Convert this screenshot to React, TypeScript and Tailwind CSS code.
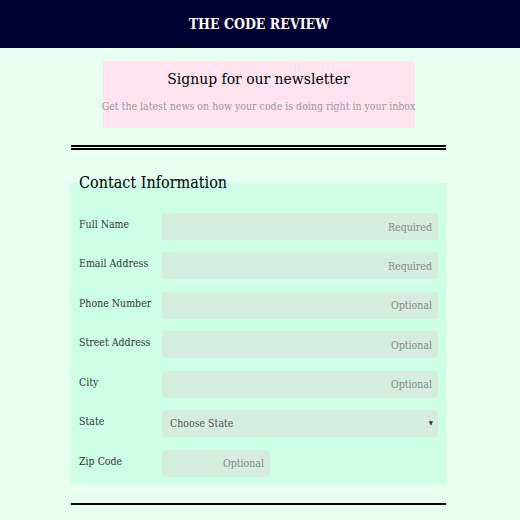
import { ChangeEvent, useState } from "react";

const fields = [
  { label: "Full Name", hint: "Required" },
  { label: "Email Address", hint: "Required" },
  { label: "Phone Number", hint: "Optional" },
  { label: "Street Address", hint: "Optional" },
  { label: "City", hint: "Optional" },
];

const serif = "font-['DejaVu_Serif_Condensed','DejaVu_Serif',serif] [font-stretch:condensed]";

function Row({ label, children }: { label: string; children: React.ReactNode }) {
  return (
    <div className="flex items-start">
      <label className="w-[83px] flex-none whitespace-nowrap pt-[4px] text-[10.5px] leading-[14px] text-[#333]">{label}</label>
      {children}
    </div>
  );
}

export default function App() {
  const [state, setState] = useState("");

  return (
    <div className={`min-h-screen bg-[#e6fff0] ${serif}`}>
      <header className="flex h-[48px] items-center justify-center bg-[#000033] pr-[2px]">
        <h1 className="text-[14px] font-bold text-white">THE CODE REVIEW</h1>
      </header>

      <main className="pr-[3px]">
        <section className="mx-auto mt-[13px] flex h-[67px] w-[312px] flex-col items-center bg-[#ffe4f0] pt-[6px]">
          <h2 className="text-[15.5px] leading-[24px] text-black">Signup for our newsletter</h2>
          <p className="mt-[8px] whitespace-nowrap text-[10.5px] text-[#999]">
            Get the latest news on how your code is doing right in your inbox
          </p>
        </section>

        <div className="mx-auto mt-[17px] w-[375px] border-t-[5px] border-double border-black" />

        <form className="mx-auto mt-[22px] w-[375px]">
          <fieldset className="bg-[#ccffe6] px-[8px] pb-[7px]">
            <legend className="px-0 text-[16px] leading-[22px] text-black">Contact Information</legend>
            <div className="mt-[19px] flex flex-col gap-[12.4px]">
              {fields.map((f) => (
                <Row key={f.label} label={f.label}>
                  <input
                    placeholder={f.hint}
                    className="h-[27px] flex-1 rounded-[2px] bg-[#d4ede0] px-[6px] text-right text-[10.5px] outline-none placeholder:text-[#888]"
                  />
                </Row>
              ))}
              <Row label="State">
                <div className="relative flex-1">
                  <select
                    value={state}
                    onChange={(e: ChangeEvent<HTMLSelectElement>) => setState(e.target.value)}
                    className="h-[27px] w-full appearance-none rounded-[2px] bg-[#d4ede0] px-[8px] text-[10.5px] text-[#555] outline-none"
                  >
                    <option value="">Choose State</option>
                    <option value="CA">California</option>
                    <option value="NY">New York</option>
                    <option value="TX">Texas</option>
                  </select>
                  <span className="pointer-events-none absolute right-[5px] top-[8px] text-[6px] text-[#333]">▼</span>
                </div>
              </Row>
              <Row label="Zip Code">
                <input
                  placeholder="Optional"
                  className="h-[27px] w-[108px] rounded-[2px] bg-[#d4ede0] px-[6px] text-right text-[10.5px] outline-none placeholder:text-[#888]"
                />
              </Row>
            </div>
          </fieldset>
        </form>

        <div className="mx-auto mt-[19px] w-[375px] border-t-[2px] border-black" />
      </main>
    </div>
  );
}
